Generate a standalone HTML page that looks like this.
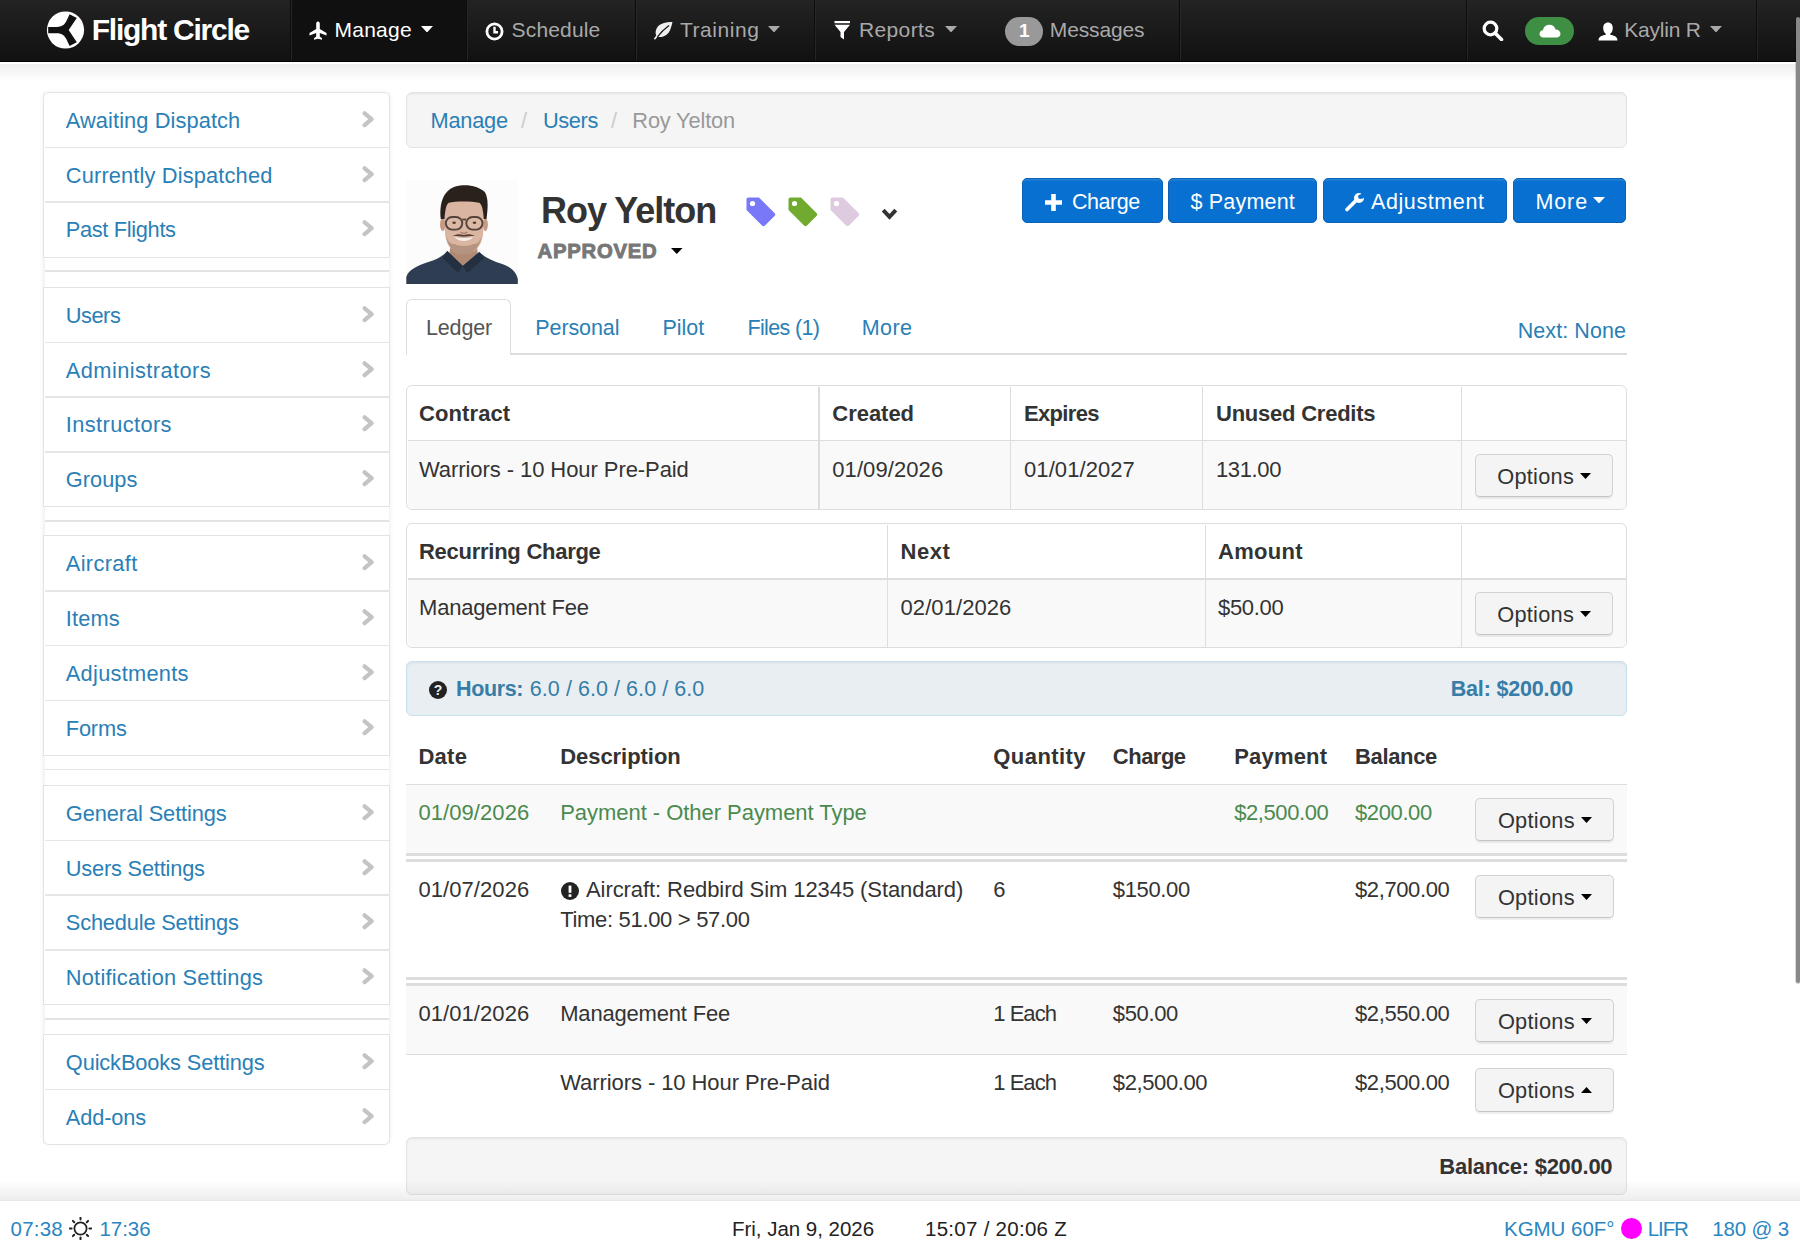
<!DOCTYPE html>
<html><head><meta charset="utf-8"><title>Roy Yelton - Flight Circle</title>
<style>
html,body{margin:0;padding:0;background:#fff;width:1800px;height:1253px;overflow:hidden;}
body{position:relative;font-family:"Liberation Sans",sans-serif;}
.t{position:absolute;white-space:nowrap;}
.b{position:absolute;}
</style></head><body>
<div class="b" style="left:0.00px;top:0.00px;width:1800.00px;height:61.00px;background:linear-gradient(#232323,#111111);"></div>
<div class="b" style="left:0.00px;top:60.75px;width:1800.00px;height:1.50px;background:#000;"></div>
<div class="b" style="left:0.00px;top:62.00px;width:1800.00px;height:20.00px;background:linear-gradient(rgba(0,0,0,0.075),rgba(0,0,0,0));"></div>
<div class="b" style="left:0.00px;top:62.00px;width:1800.00px;height:2.00px;background:#fff;"></div>
<div class="b" style="left:291.00px;top:0.00px;width:176.50px;height:60.75px;background:#101010;"></div>
<div class="b" style="left:290.00px;top:0.00px;width:1.00px;height:60.00px;background:#0c0c0c;"></div>
<div class="b" style="left:291.00px;top:0.00px;width:1.00px;height:60.00px;background:#262626;"></div>
<div class="b" style="left:466.00px;top:0.00px;width:1.00px;height:60.00px;background:#0c0c0c;"></div>
<div class="b" style="left:467.00px;top:0.00px;width:1.00px;height:60.00px;background:#262626;"></div>
<div class="b" style="left:635.00px;top:0.00px;width:1.00px;height:60.00px;background:#0c0c0c;"></div>
<div class="b" style="left:636.00px;top:0.00px;width:1.00px;height:60.00px;background:#262626;"></div>
<div class="b" style="left:814.00px;top:0.00px;width:1.00px;height:60.00px;background:#0c0c0c;"></div>
<div class="b" style="left:815.00px;top:0.00px;width:1.00px;height:60.00px;background:#262626;"></div>
<div class="b" style="left:1179.00px;top:0.00px;width:1.00px;height:60.00px;background:#0c0c0c;"></div>
<div class="b" style="left:1180.00px;top:0.00px;width:1.00px;height:60.00px;background:#262626;"></div>
<div class="b" style="left:1466.00px;top:0.00px;width:1.00px;height:60.00px;background:#0c0c0c;"></div>
<div class="b" style="left:1467.00px;top:0.00px;width:1.00px;height:60.00px;background:#262626;"></div>
<div class="b" style="left:1756.00px;top:0.00px;width:1.00px;height:60.00px;background:#0c0c0c;"></div>
<div class="b" style="left:1757.00px;top:0.00px;width:1.00px;height:60.00px;background:#262626;"></div>
<svg class="b" style="left:46.00px;top:11.00px" width="39" height="38" viewBox="0 0 39 38"><circle cx="19.5" cy="19" r="18.6" fill="#fff"/><path d="M2.2,15.9 L11,15.9 C15.5,15.9 18.3,13.8 20.3,10.2 L23.6,3.2 L30.8,6.9 L22.7,19.1 L30.8,31.3 L23.6,35 L20.3,28 C18.3,24.4 15.5,22.3 11,22.3 L2.2,22.3 Z" fill="#111"/></svg>
<div class="t" style="left:91.70px;top:12.67px;font-size:30.00px;line-height:34.47px;color:#fff;font-weight:700;letter-spacing:-1.235px;">Flight Circle</div>
<svg class="b" style="left:309.00px;top:21.00px" width="18" height="19" viewBox="0 0 18 19"><path d="M9,0.5 C10.3,0.5 10.8,1.8 10.8,3 L10.8,8 L17.5,12 L17.5,14.5 L10.8,12 L10.8,15.5 L13,17.3 L13,18.7 L9,17.8 L5,18.7 L5,17.3 L7.2,15.5 L7.2,12 L0.5,14.5 L0.5,12 L7.2,8 L7.2,3 C7.2,1.8 7.7,0.5 9,0.5 Z" fill="#fff"/></svg>
<div class="t" style="left:334.40px;top:17.86px;font-size:21.00px;line-height:24.13px;color:#fff;letter-spacing:0.285px;">Manage</div>
<svg class="b" style="left:421.00px;top:25.80px" width="12" height="6.5" viewBox="0 0 12 6.5"><path d="M0,0 L12,0 L6,6.5 Z" fill="#fff"/></svg>
<svg class="b" style="left:485.00px;top:21.50px" width="19" height="19" viewBox="0 0 19 19"><circle cx="9.5" cy="9.5" r="7.6" fill="none" stroke="#fff" stroke-width="2.8"/><path d="M9.5,4.8 L9.5,10.2 L13,10.2" fill="none" stroke="#fff" stroke-width="2.4"/></svg>
<div class="t" style="left:511.60px;top:17.86px;font-size:21.00px;line-height:24.13px;color:#a9a9a9;letter-spacing:0.154px;">Schedule</div>
<svg class="b" style="left:653.00px;top:21.00px" width="20" height="19" viewBox="0 0 20 19"><path d="M19.5,1 C13,1 5,2 3,9 C2.3,11.5 2.6,13.5 3.3,14.5 L0.8,17.8 L2,18.8 L4.5,15.8 C10,17 15.5,14 17.5,8 C18.5,5 19,3 19.5,1 Z" fill="#eee"/><path d="M4.5,15.8 C8,11 12,7.5 16,4.5" fill="none" stroke="#161616" stroke-width="1.2"/></svg>
<div class="t" style="left:680.00px;top:17.86px;font-size:21.00px;line-height:24.13px;color:#a9a9a9;letter-spacing:0.539px;">Training</div>
<svg class="b" style="left:768.00px;top:25.80px" width="12" height="6.5" viewBox="0 0 12 6.5"><path d="M0,0 L12,0 L6,6.5 Z" fill="#a9a9a9"/></svg>
<svg class="b" style="left:834.00px;top:20.50px" width="16.5" height="19" viewBox="0 0 16.5 19"><rect x="0.5" y="0" width="15.5" height="2.2" fill="#fff"/><path d="M0.5,3.8 L16,3.8 L10,11 L10,18.5 L6.5,16 L6.5,11 Z" fill="#fff"/></svg>
<div class="t" style="left:859.00px;top:17.86px;font-size:21.00px;line-height:24.13px;color:#a9a9a9;letter-spacing:0.367px;">Reports</div>
<svg class="b" style="left:945.00px;top:25.80px" width="12" height="6.5" viewBox="0 0 12 6.5"><path d="M0,0 L12,0 L6,6.5 Z" fill="#a9a9a9"/></svg>
<div class="b" style="left:1005.40px;top:16.90px;width:37.60px;height:28.70px;background:#999;border-radius:14.4px;"></div>
<div class="t" style="left:1005.40px;top:19.80px;font-size:19.00px;line-height:21.83px;color:#fff;font-weight:700;width:37.6px;text-align:center;">1</div>
<div class="t" style="left:1049.80px;top:17.86px;font-size:21.00px;line-height:24.13px;color:#a9a9a9;letter-spacing:-0.139px;">Messages</div>
<svg class="b" style="left:1482.00px;top:20.00px" width="22" height="21" viewBox="0 0 22 21"><circle cx="8.5" cy="8.5" r="6.3" fill="none" stroke="#fff" stroke-width="3.2"/><path d="M13,13 L19.5,19.5" stroke="#fff" stroke-width="3.6" stroke-linecap="round"/></svg>
<div class="b" style="left:1525.00px;top:16.90px;width:48.60px;height:28.40px;background:#3e8e43;border-radius:14.2px;"></div>
<svg class="b" style="left:1538.50px;top:23.50px" width="22" height="14" viewBox="0 0 22 14"><path d="M4.5,13.5 C1.8,13.5 0.5,11.8 0.5,9.8 C0.5,7.7 2,6.3 4,6.2 C4.5,3 7,0.8 10.5,0.8 C13.5,0.8 15.8,2.8 16.5,5.5 C19.5,5.5 21.5,7.5 21.5,9.8 C21.5,12 19.8,13.5 17.5,13.5 Z" fill="#fff"/></svg>
<svg class="b" style="left:1597.50px;top:22.00px" width="20" height="18.5" viewBox="0 0 20 18.5"><path d="M10,0.5 C13,0.5 14.8,2.8 14.8,6 C14.8,8.8 13.5,11 12.2,11.8 L12.2,12.8 C16.5,13.6 19.5,15 19.5,18.5 L0.5,18.5 C0.5,15 3.5,13.6 7.8,12.8 L7.8,11.8 C6.5,11 5.2,8.8 5.2,6 C5.2,2.8 7,0.5 10,0.5 Z" fill="#fff"/></svg>
<div class="t" style="left:1624.20px;top:17.86px;font-size:21.00px;line-height:24.13px;color:#a9a9a9;letter-spacing:-0.212px;">Kaylin R</div>
<svg class="b" style="left:1710.00px;top:25.80px" width="12" height="6.5" viewBox="0 0 12 6.5"><path d="M0,0 L12,0 L6,6.5 Z" fill="#a9a9a9"/></svg>
<div class="b" style="left:43.30px;top:91.70px;width:347.00px;height:1052.60px;border-radius:6px;background:#fff;box-shadow:0 0 5px rgba(0,0,0,0.06);"></div>
<div class="b" style="left:43.30px;top:91.70px;width:1.50px;height:1052.60px;background:#f4f4f4;"></div>
<div class="b" style="left:388.80px;top:91.70px;width:1.50px;height:1052.60px;background:#f4f4f4;"></div>
<div class="b" style="left:43.30px;top:91.70px;width:347.00px;height:165.90px;box-sizing:border-box;border:1.5px solid #e3e3e3;border-radius:6px 6px 0 0;background:#fff;"></div>
<div class="t" style="left:65.80px;top:107.72px;font-size:21.80px;line-height:25.05px;color:#2a80b6;letter-spacing:0.095px;">Awaiting Dispatch</div>
<svg class="b" style="left:360.50px;top:109.70px" width="14" height="18" viewBox="0 0 14 18"><path d="M3.6,3.3 L10.6,9.2 L3.6,15.1" fill="none" stroke="#c4c4c4" stroke-width="4.2" stroke-linejoin="round" stroke-linecap="round"/></svg>
<div class="b" style="left:44.50px;top:146.50px;width:345.00px;height:1.50px;background:#e6e6e6;"></div>
<div class="t" style="left:65.80px;top:162.52px;font-size:21.80px;line-height:25.05px;color:#2a80b6;letter-spacing:0.157px;">Currently Dispatched</div>
<svg class="b" style="left:360.50px;top:164.50px" width="14" height="18" viewBox="0 0 14 18"><path d="M3.6,3.3 L10.6,9.2 L3.6,15.1" fill="none" stroke="#c4c4c4" stroke-width="4.2" stroke-linejoin="round" stroke-linecap="round"/></svg>
<div class="b" style="left:44.50px;top:201.30px;width:345.00px;height:1.50px;background:#e6e6e6;"></div>
<div class="t" style="left:65.80px;top:217.32px;font-size:21.80px;line-height:25.05px;color:#2a80b6;letter-spacing:-0.332px;">Past Flights</div>
<svg class="b" style="left:360.50px;top:219.30px" width="14" height="18" viewBox="0 0 14 18"><path d="M3.6,3.3 L10.6,9.2 L3.6,15.1" fill="none" stroke="#c4c4c4" stroke-width="4.2" stroke-linejoin="round" stroke-linecap="round"/></svg>
<div class="b" style="left:44.50px;top:270.20px;width:344.00px;height:1.50px;background:#e3e3e3;"></div>
<div class="b" style="left:43.30px;top:286.70px;width:347.00px;height:220.70px;box-sizing:border-box;border:1.5px solid #e3e3e3;border-radius:0;background:#fff;"></div>
<div class="t" style="left:65.80px;top:302.72px;font-size:21.80px;line-height:25.05px;color:#2a80b6;letter-spacing:-0.485px;">Users</div>
<svg class="b" style="left:360.50px;top:304.70px" width="14" height="18" viewBox="0 0 14 18"><path d="M3.6,3.3 L10.6,9.2 L3.6,15.1" fill="none" stroke="#c4c4c4" stroke-width="4.2" stroke-linejoin="round" stroke-linecap="round"/></svg>
<div class="b" style="left:44.50px;top:341.50px;width:345.00px;height:1.50px;background:#e6e6e6;"></div>
<div class="t" style="left:65.80px;top:357.52px;font-size:21.80px;line-height:25.05px;color:#2a80b6;letter-spacing:0.427px;">Administrators</div>
<svg class="b" style="left:360.50px;top:359.50px" width="14" height="18" viewBox="0 0 14 18"><path d="M3.6,3.3 L10.6,9.2 L3.6,15.1" fill="none" stroke="#c4c4c4" stroke-width="4.2" stroke-linejoin="round" stroke-linecap="round"/></svg>
<div class="b" style="left:44.50px;top:396.30px;width:345.00px;height:1.50px;background:#e6e6e6;"></div>
<div class="t" style="left:65.80px;top:412.32px;font-size:21.80px;line-height:25.05px;color:#2a80b6;letter-spacing:0.394px;">Instructors</div>
<svg class="b" style="left:360.50px;top:414.30px" width="14" height="18" viewBox="0 0 14 18"><path d="M3.6,3.3 L10.6,9.2 L3.6,15.1" fill="none" stroke="#c4c4c4" stroke-width="4.2" stroke-linejoin="round" stroke-linecap="round"/></svg>
<div class="b" style="left:44.50px;top:451.10px;width:345.00px;height:1.50px;background:#e6e6e6;"></div>
<div class="t" style="left:65.80px;top:467.12px;font-size:21.80px;line-height:25.05px;color:#2a80b6;letter-spacing:0.002px;">Groups</div>
<svg class="b" style="left:360.50px;top:469.10px" width="14" height="18" viewBox="0 0 14 18"><path d="M3.6,3.3 L10.6,9.2 L3.6,15.1" fill="none" stroke="#c4c4c4" stroke-width="4.2" stroke-linejoin="round" stroke-linecap="round"/></svg>
<div class="b" style="left:44.50px;top:520.00px;width:344.00px;height:1.50px;background:#e3e3e3;"></div>
<div class="b" style="left:43.30px;top:535.20px;width:347.00px;height:220.70px;box-sizing:border-box;border:1.5px solid #e3e3e3;border-radius:0;background:#fff;"></div>
<div class="t" style="left:65.80px;top:551.22px;font-size:21.80px;line-height:25.05px;color:#2a80b6;letter-spacing:0.345px;">Aircraft</div>
<svg class="b" style="left:360.50px;top:553.20px" width="14" height="18" viewBox="0 0 14 18"><path d="M3.6,3.3 L10.6,9.2 L3.6,15.1" fill="none" stroke="#c4c4c4" stroke-width="4.2" stroke-linejoin="round" stroke-linecap="round"/></svg>
<div class="b" style="left:44.50px;top:590.00px;width:345.00px;height:1.50px;background:#e6e6e6;"></div>
<div class="t" style="left:65.80px;top:606.02px;font-size:21.80px;line-height:25.05px;color:#2a80b6;letter-spacing:0.140px;">Items</div>
<svg class="b" style="left:360.50px;top:608.00px" width="14" height="18" viewBox="0 0 14 18"><path d="M3.6,3.3 L10.6,9.2 L3.6,15.1" fill="none" stroke="#c4c4c4" stroke-width="4.2" stroke-linejoin="round" stroke-linecap="round"/></svg>
<div class="b" style="left:44.50px;top:644.80px;width:345.00px;height:1.50px;background:#e6e6e6;"></div>
<div class="t" style="left:65.80px;top:660.82px;font-size:21.80px;line-height:25.05px;color:#2a80b6;letter-spacing:0.277px;">Adjustments</div>
<svg class="b" style="left:360.50px;top:662.80px" width="14" height="18" viewBox="0 0 14 18"><path d="M3.6,3.3 L10.6,9.2 L3.6,15.1" fill="none" stroke="#c4c4c4" stroke-width="4.2" stroke-linejoin="round" stroke-linecap="round"/></svg>
<div class="b" style="left:44.50px;top:699.60px;width:345.00px;height:1.50px;background:#e6e6e6;"></div>
<div class="t" style="left:65.80px;top:715.62px;font-size:21.80px;line-height:25.05px;color:#2a80b6;letter-spacing:-0.192px;">Forms</div>
<svg class="b" style="left:360.50px;top:717.60px" width="14" height="18" viewBox="0 0 14 18"><path d="M3.6,3.3 L10.6,9.2 L3.6,15.1" fill="none" stroke="#c4c4c4" stroke-width="4.2" stroke-linejoin="round" stroke-linecap="round"/></svg>
<div class="b" style="left:44.50px;top:768.50px;width:344.00px;height:1.50px;background:#e3e3e3;"></div>
<div class="b" style="left:43.30px;top:784.70px;width:347.00px;height:220.70px;box-sizing:border-box;border:1.5px solid #e3e3e3;border-radius:0;background:#fff;"></div>
<div class="t" style="left:65.80px;top:800.72px;font-size:21.80px;line-height:25.05px;color:#2a80b6;letter-spacing:-0.093px;">General Settings</div>
<svg class="b" style="left:360.50px;top:802.70px" width="14" height="18" viewBox="0 0 14 18"><path d="M3.6,3.3 L10.6,9.2 L3.6,15.1" fill="none" stroke="#c4c4c4" stroke-width="4.2" stroke-linejoin="round" stroke-linecap="round"/></svg>
<div class="b" style="left:44.50px;top:839.50px;width:345.00px;height:1.50px;background:#e6e6e6;"></div>
<div class="t" style="left:65.80px;top:855.52px;font-size:21.80px;line-height:25.05px;color:#2a80b6;letter-spacing:-0.197px;">Users Settings</div>
<svg class="b" style="left:360.50px;top:857.50px" width="14" height="18" viewBox="0 0 14 18"><path d="M3.6,3.3 L10.6,9.2 L3.6,15.1" fill="none" stroke="#c4c4c4" stroke-width="4.2" stroke-linejoin="round" stroke-linecap="round"/></svg>
<div class="b" style="left:44.50px;top:894.30px;width:345.00px;height:1.50px;background:#e6e6e6;"></div>
<div class="t" style="left:65.80px;top:910.32px;font-size:21.80px;line-height:25.05px;color:#2a80b6;letter-spacing:-0.167px;">Schedule Settings</div>
<svg class="b" style="left:360.50px;top:912.30px" width="14" height="18" viewBox="0 0 14 18"><path d="M3.6,3.3 L10.6,9.2 L3.6,15.1" fill="none" stroke="#c4c4c4" stroke-width="4.2" stroke-linejoin="round" stroke-linecap="round"/></svg>
<div class="b" style="left:44.50px;top:949.10px;width:345.00px;height:1.50px;background:#e6e6e6;"></div>
<div class="t" style="left:65.80px;top:965.12px;font-size:21.80px;line-height:25.05px;color:#2a80b6;letter-spacing:0.225px;">Notification Settings</div>
<svg class="b" style="left:360.50px;top:967.10px" width="14" height="18" viewBox="0 0 14 18"><path d="M3.6,3.3 L10.6,9.2 L3.6,15.1" fill="none" stroke="#c4c4c4" stroke-width="4.2" stroke-linejoin="round" stroke-linecap="round"/></svg>
<div class="b" style="left:44.50px;top:1018.00px;width:344.00px;height:1.50px;background:#e3e3e3;"></div>
<div class="b" style="left:43.30px;top:1033.90px;width:347.00px;height:111.10px;box-sizing:border-box;border:1.5px solid #e3e3e3;border-radius:0 0 6px 6px;background:#fff;"></div>
<div class="t" style="left:65.80px;top:1049.92px;font-size:21.80px;line-height:25.05px;color:#2a80b6;letter-spacing:-0.123px;">QuickBooks Settings</div>
<svg class="b" style="left:360.50px;top:1051.90px" width="14" height="18" viewBox="0 0 14 18"><path d="M3.6,3.3 L10.6,9.2 L3.6,15.1" fill="none" stroke="#c4c4c4" stroke-width="4.2" stroke-linejoin="round" stroke-linecap="round"/></svg>
<div class="b" style="left:44.50px;top:1088.70px;width:345.00px;height:1.50px;background:#e6e6e6;"></div>
<div class="t" style="left:65.80px;top:1104.72px;font-size:21.80px;line-height:25.05px;color:#2a80b6;letter-spacing:-0.142px;">Add-ons</div>
<svg class="b" style="left:360.50px;top:1106.70px" width="14" height="18" viewBox="0 0 14 18"><path d="M3.6,3.3 L10.6,9.2 L3.6,15.1" fill="none" stroke="#c4c4c4" stroke-width="4.2" stroke-linejoin="round" stroke-linecap="round"/></svg>
<div class="b" style="left:406.40px;top:91.90px;width:1220.80px;height:55.80px;box-sizing:border-box;background:#f5f5f5;border:1.5px solid #e3e3e3;border-radius:6px;box-shadow:inset 0 1.5px 1.5px rgba(0,0,0,0.05);"></div>
<div class="t" style="left:430.60px;top:107.67px;font-size:21.80px;line-height:25.05px;color:#2a80b6;letter-spacing:-0.263px;">Manage</div>
<div class="t" style="left:521.00px;top:107.67px;font-size:21.80px;line-height:25.05px;color:#ccc;">/</div>
<div class="t" style="left:543.00px;top:107.67px;font-size:21.80px;line-height:25.05px;color:#2a80b6;letter-spacing:-0.405px;">Users</div>
<div class="t" style="left:611.00px;top:107.67px;font-size:21.80px;line-height:25.05px;color:#ccc;">/</div>
<div class="t" style="left:632.30px;top:107.67px;font-size:21.80px;line-height:25.05px;color:#999;letter-spacing:-0.154px;">Roy Yelton</div>
<svg class="b" style="left:405.70px;top:180.00px" width="112" height="104" viewBox="405.7 180 112 104"><rect x="405.7" y="180" width="112" height="104" fill="#fcfcfc"/><path d="M451,240 L476,240 L479,268 L447,268 Z" fill="#b08a74"/><path d="M406,284 L406,277 C408,270 416,266 428,262 C436,259.5 442,257 447,251 L462.5,266 L479,252 C484,257 492,261 502,264 C511,267 516,272 517.5,279 L517.5,284 Z" fill="#2e3d51"/><path d="M447,251 L462.5,266 L458,273 L442,258 Z" fill="#243042"/><path d="M479,252 L462.5,266 L467,273 L484,258 Z" fill="#243042"/><ellipse cx="442.5" cy="224.5" rx="2.8" ry="6.5" fill="#c69a85"/><ellipse cx="485" cy="224.5" rx="2.6" ry="6.5" fill="#c69a85"/><path d="M444.5,207 C444.5,201 450,199 463.5,199 C477,199 483,201 483,207 L483,229 C483,240 479.5,248 472,252.5 C468,254.6 459,254.6 455,252.5 C448,248 444.5,240 444.5,229 Z" fill="#dab6a2"/><path d="M445,233 C446.5,243 450.5,249 455,252.5 C459,254.6 468,254.6 472,252.5 C476.5,249 480.5,243 482.5,233 C481,240 477.5,244.5 473,244 C469,246.5 458,246.5 454,244 C449.5,244.5 446.5,240 445,233 Z" fill="#7a5c4a" opacity="0.38"/><path d="M440.5,219 C439,205 442,191 455,186.5 C465,183.5 478,185.5 484.5,192 C488.5,198 487.5,210 486.2,219 L483.3,219 C483,211 482,205 479,202.8 C471,201 455,201 448.5,202.8 C445.5,205 444.8,211 444.3,219 Z" fill="#2b211c"/><rect x="445.5" y="217" width="16.5" height="12.6" rx="6.3" fill="#e2c0ac" fill-opacity="0.3" stroke="#54443b" stroke-width="1.9"/><rect x="466" y="217" width="16.2" height="12.6" rx="6.3" fill="#e2c0ac" fill-opacity="0.3" stroke="#54443b" stroke-width="1.9"/><path d="M462,219.5 L466,219.5" stroke="#54443b" stroke-width="1.8"/><ellipse cx="453.8" cy="222.8" rx="1.8" ry="1.2" fill="#5a4034"/><ellipse cx="474.2" cy="222.8" rx="1.8" ry="1.2" fill="#5a4034"/><path d="M460,232 C462,233.5 465,233.5 467,232" stroke="#a07a66" stroke-width="1.2" fill="none"/><path d="M452.5,236 C456,234 460,233.8 463.5,235 C467,233.8 471,234 474.5,236 C470,236 466,236.3 463.5,236.8 C461,236.3 457,236 452.5,236 Z" fill="#5a4032"/><path d="M454,236.8 C458,242.5 469,242.5 473,236.8 C468,238.5 459,238.5 454,236.8 Z" fill="#f5eee8"/></svg>
<div class="t" style="left:541.10px;top:190.44px;font-size:36.00px;line-height:41.36px;color:#333;font-weight:700;letter-spacing:-1.038px;">Roy Yelton</div>
<div class="t" style="left:537.50px;top:239.60px;font-size:20.30px;line-height:23.32px;color:#777;font-weight:700;letter-spacing:0.759px;-webkit-text-stroke:0.9px #777;">APPROVED</div>
<svg class="b" style="left:671.00px;top:247.80px" width="11.5" height="6" viewBox="0 0 11.5 6"><path d="M0,0 L11.5,0 L5.75,6 Z" fill="#000"/></svg>
<svg class="b" style="left:746.00px;top:196.50px" width="30" height="30" viewBox="0 0 30 30"><path d="M2.5,0.5 L13,0.5 L28.5,16 C29.5,17 29.5,18 28.5,19 L19,28.5 C18,29.5 17,29.5 16,28.5 L0.5,13 L0.5,2.5 C0.5,1.3 1.3,0.5 2.5,0.5 Z" fill="#7878f8"/><circle cx="6.5" cy="6.5" r="2.6" fill="#fff"/></svg>
<svg class="b" style="left:788.00px;top:196.50px" width="30" height="30" viewBox="0 0 30 30"><path d="M2.5,0.5 L13,0.5 L28.5,16 C29.5,17 29.5,18 28.5,19 L19,28.5 C18,29.5 17,29.5 16,28.5 L0.5,13 L0.5,2.5 C0.5,1.3 1.3,0.5 2.5,0.5 Z" fill="#70ab30"/><circle cx="6.5" cy="6.5" r="2.6" fill="#fff"/></svg>
<svg class="b" style="left:829.50px;top:196.50px" width="30" height="30" viewBox="0 0 30 30"><path d="M2.5,0.5 L13,0.5 L28.5,16 C29.5,17 29.5,18 28.5,19 L19,28.5 C18,29.5 17,29.5 16,28.5 L0.5,13 L0.5,2.5 C0.5,1.3 1.3,0.5 2.5,0.5 Z" fill="#dfcbe0"/><circle cx="6.5" cy="6.5" r="2.6" fill="#fff"/></svg>
<svg class="b" style="left:880.50px;top:208.00px" width="17" height="12" viewBox="0 0 17 12"><path d="M2.2,2.2 L8.5,8.8 L14.8,2.2" fill="none" stroke="#333" stroke-width="4"/></svg>
<div class="b" style="left:1021.90px;top:178.00px;width:140.80px;height:44.70px;box-sizing:border-box;background:#0770d1;border:1.5px solid #0b61b4;border-radius:5px;box-shadow:inset 0 1.5px 0 rgba(255,255,255,0.12);"></div>
<div class="t" style="left:1071.90px;top:189.80px;font-size:21.50px;line-height:24.70px;color:#fff;letter-spacing:-0.419px;">Charge</div>
<svg class="b" style="left:1044.80px;top:193.60px" width="17" height="17" viewBox="0 0 17 17"><path d="M8.5,0 L8.5,17 M0,8.5 L17,8.5" stroke="#fff" stroke-width="4.6"/></svg>
<div class="b" style="left:1167.90px;top:178.00px;width:148.70px;height:44.70px;box-sizing:border-box;background:#0770d1;border:1.5px solid #0b61b4;border-radius:5px;box-shadow:inset 0 1.5px 0 rgba(255,255,255,0.12);"></div>
<div class="t" style="left:1190.50px;top:189.80px;font-size:21.50px;line-height:24.70px;color:#fff;letter-spacing:0.192px;">$ Payment</div>
<div class="b" style="left:1323.00px;top:178.00px;width:183.50px;height:44.70px;box-sizing:border-box;background:#0770d1;border:1.5px solid #0b61b4;border-radius:5px;box-shadow:inset 0 1.5px 0 rgba(255,255,255,0.12);"></div>
<div class="t" style="left:1371.00px;top:189.80px;font-size:21.50px;line-height:24.70px;color:#fff;letter-spacing:0.595px;">Adjustment</div>
<svg class="b" style="left:1345.00px;top:191.00px" width="21" height="21" viewBox="0 0 21 21"><path d="M2,18.5 L11,9.5" stroke="#fff" stroke-width="3.6" stroke-linecap="round"/><circle cx="14" cy="7" r="5" fill="#fff"/><circle cx="15.3" cy="5.7" r="2.2" fill="#0770d1"/><path d="M15.3,3.5 L19,-0.2 L22.2,3 L17.5,7.9 Z" fill="#0770d1"/></svg>
<div class="b" style="left:1512.60px;top:178.00px;width:113.80px;height:44.70px;box-sizing:border-box;background:#0770d1;border:1.5px solid #0b61b4;border-radius:5px;box-shadow:inset 0 1.5px 0 rgba(255,255,255,0.12);"></div>
<div class="t" style="left:1535.50px;top:189.80px;font-size:21.50px;line-height:24.70px;color:#fff;letter-spacing:0.879px;">More</div>
<svg class="b" style="left:1592.50px;top:196.50px" width="12" height="6.5" viewBox="0 0 12 6.5"><path d="M0,0 L12,0 L6,6.5 Z" fill="#fff"/></svg>
<div class="b" style="left:406.00px;top:353.20px;width:1220.70px;height:1.50px;background:#ddd;"></div>
<div class="b" style="left:406.00px;top:299.30px;width:105.00px;height:55.50px;box-sizing:border-box;background:#fff;border:1.5px solid #ddd;border-bottom:none;border-radius:6px 6px 0 0;"></div>
<div class="t" style="left:426.00px;top:315.50px;font-size:21.50px;line-height:24.70px;color:#555;letter-spacing:-0.157px;">Ledger</div>
<div class="t" style="left:535.30px;top:315.50px;font-size:21.50px;line-height:24.70px;color:#2a80b6;letter-spacing:-0.107px;">Personal</div>
<div class="t" style="left:662.50px;top:315.50px;font-size:21.50px;line-height:24.70px;color:#2a80b6;letter-spacing:-0.025px;">Pilot</div>
<div class="t" style="left:747.50px;top:315.50px;font-size:21.50px;line-height:24.70px;color:#2a80b6;letter-spacing:-0.660px;">Files (1)</div>
<div class="t" style="left:861.70px;top:315.50px;font-size:21.50px;line-height:24.70px;color:#2a80b6;letter-spacing:0.454px;">More</div>
<div class="t" style="left:1517.70px;top:318.60px;font-size:21.50px;line-height:24.70px;color:#2a80b6;letter-spacing:0.075px;">Next: None</div>
<div class="b" style="left:406.20px;top:385.20px;width:1221.00px;height:125.00px;box-sizing:border-box;border:1.5px solid #ddd;border-radius:6px;background:#fff;overflow:hidden;"></div>
<div class="b" style="left:407.70px;top:440.60px;width:1218.00px;height:68.10px;background:#f9f9f9;border-radius:0 0 5px 5px;"></div>
<div class="b" style="left:407.70px;top:439.85px;width:1218.00px;height:1.50px;background:#ddd;"></div>
<div class="b" style="left:818.45px;top:386.70px;width:1.50px;height:122.00px;background:#ddd;"></div>
<div class="b" style="left:1009.95px;top:386.70px;width:1.50px;height:122.00px;background:#ddd;"></div>
<div class="b" style="left:1201.95px;top:386.70px;width:1.50px;height:122.00px;background:#ddd;"></div>
<div class="b" style="left:1460.75px;top:386.70px;width:1.50px;height:122.00px;background:#ddd;"></div>
<div class="t" style="left:419.00px;top:401.14px;font-size:22.00px;line-height:25.28px;color:#333;font-weight:700;letter-spacing:0.106px;">Contract</div>
<div class="t" style="left:832.30px;top:401.14px;font-size:22.00px;line-height:25.28px;color:#333;font-weight:700;letter-spacing:-0.031px;">Created</div>
<div class="t" style="left:1024.00px;top:401.14px;font-size:22.00px;line-height:25.28px;color:#333;font-weight:700;letter-spacing:-0.670px;">Expires</div>
<div class="t" style="left:1216.00px;top:401.14px;font-size:22.00px;line-height:25.28px;color:#333;font-weight:700;letter-spacing:-0.234px;">Unused Credits</div>
<div class="t" style="left:419.00px;top:456.94px;font-size:22.00px;line-height:25.28px;color:#333;letter-spacing:-0.075px;">Warriors - 10 Hour Pre-Paid</div>
<div class="t" style="left:832.30px;top:456.94px;font-size:22.00px;line-height:25.28px;color:#333;letter-spacing:0.079px;">01/09/2026</div>
<div class="t" style="left:1024.00px;top:456.94px;font-size:22.00px;line-height:25.28px;color:#333;letter-spacing:0.079px;">01/01/2027</div>
<div class="t" style="left:1216.00px;top:456.94px;font-size:22.00px;line-height:25.28px;color:#333;letter-spacing:-0.381px;">131.00</div>
<div class="b" style="left:1474.70px;top:453.50px;width:138.50px;height:43.50px;box-sizing:border-box;background:#f4f4f4;border:1.5px solid #d2d2d2;border-bottom-color:#c4c4c4;border-radius:5px;box-shadow:0 1.5px 1px rgba(0,0,0,0.07);"></div>
<div class="t" style="left:1497.20px;top:463.62px;font-size:21.80px;line-height:25.05px;color:#333;letter-spacing:0.267px;">Options</div>
<svg class="b" style="left:1580.20px;top:472.50px" width="11" height="6.5" viewBox="0 0 11 6.5"><path d="M0,0 L11,0 L5.5,6 Z" fill="#000"/></svg>
<div class="b" style="left:406.20px;top:523.30px;width:1221.00px;height:125.00px;box-sizing:border-box;border:1.5px solid #ddd;border-radius:6px;background:#fff;overflow:hidden;"></div>
<div class="b" style="left:407.70px;top:578.80px;width:1218.00px;height:68.00px;background:#f9f9f9;border-radius:0 0 5px 5px;"></div>
<div class="b" style="left:407.70px;top:578.05px;width:1218.00px;height:1.50px;background:#ddd;"></div>
<div class="b" style="left:886.85px;top:524.80px;width:1.50px;height:122.00px;background:#ddd;"></div>
<div class="b" style="left:1204.75px;top:524.80px;width:1.50px;height:122.00px;background:#ddd;"></div>
<div class="b" style="left:1460.75px;top:524.80px;width:1.50px;height:122.00px;background:#ddd;"></div>
<div class="t" style="left:419.00px;top:539.24px;font-size:22.00px;line-height:25.28px;color:#333;font-weight:700;letter-spacing:-0.264px;">Recurring Charge</div>
<div class="t" style="left:900.50px;top:539.24px;font-size:22.00px;line-height:25.28px;color:#333;font-weight:700;letter-spacing:0.579px;">Next</div>
<div class="t" style="left:1218.00px;top:539.24px;font-size:22.00px;line-height:25.28px;color:#333;font-weight:700;letter-spacing:0.302px;">Amount</div>
<div class="t" style="left:419.00px;top:594.94px;font-size:22.00px;line-height:25.28px;color:#333;letter-spacing:-0.181px;">Management Fee</div>
<div class="t" style="left:900.50px;top:594.94px;font-size:22.00px;line-height:25.28px;color:#333;letter-spacing:0.079px;">02/01/2026</div>
<div class="t" style="left:1218.00px;top:594.94px;font-size:22.00px;line-height:25.28px;color:#333;letter-spacing:-0.315px;">$50.00</div>
<div class="b" style="left:1474.70px;top:591.50px;width:138.50px;height:43.50px;box-sizing:border-box;background:#f4f4f4;border:1.5px solid #d2d2d2;border-bottom-color:#c4c4c4;border-radius:5px;box-shadow:0 1.5px 1px rgba(0,0,0,0.07);"></div>
<div class="t" style="left:1497.20px;top:601.62px;font-size:21.80px;line-height:25.05px;color:#333;letter-spacing:0.267px;">Options</div>
<svg class="b" style="left:1580.20px;top:610.50px" width="11" height="6.5" viewBox="0 0 11 6.5"><path d="M0,0 L11,0 L5.5,6 Z" fill="#000"/></svg>
<div class="b" style="left:406.20px;top:661.10px;width:1221.00px;height:55.40px;box-sizing:border-box;background:#e8eef2;border:1.5px solid #c5e1ee;border-radius:6px;box-shadow:inset 0 1.5px 2px rgba(0,0,0,0.05);"></div>
<svg class="b" style="left:429.30px;top:681.00px" width="18" height="18" viewBox="0 0 18 18"><circle cx="9" cy="9" r="9" fill="#222"/><text x="9" y="14" text-anchor="middle" font-family="Liberation Sans" font-weight="700" font-size="14" fill="#e8eef2">?</text></svg>
<div class="t" style="left:456.00px;top:676.60px;font-size:21.50px;line-height:24.70px;color:#377da7;font-weight:700;letter-spacing:-0.379px;">Hours:</div>
<div class="t" style="left:529.80px;top:676.60px;font-size:21.50px;line-height:24.70px;color:#377da7;letter-spacing:0.057px;">6.0 / 6.0 / 6.0 / 6.0</div>
<div class="t" style="left:1450.70px;top:676.60px;font-size:21.50px;line-height:24.70px;color:#377da7;font-weight:700;letter-spacing:-0.167px;">Bal: $200.00</div>
<div class="t" style="left:418.40px;top:744.44px;font-size:22.00px;line-height:25.28px;color:#333;font-weight:700;letter-spacing:0.304px;">Date</div>
<div class="t" style="left:560.20px;top:744.44px;font-size:22.00px;line-height:25.28px;color:#333;font-weight:700;letter-spacing:-0.047px;">Description</div>
<div class="t" style="left:993.30px;top:744.44px;font-size:22.00px;line-height:25.28px;color:#333;font-weight:700;letter-spacing:0.434px;">Quantity</div>
<div class="t" style="left:1112.80px;top:744.44px;font-size:22.00px;line-height:25.28px;color:#333;font-weight:700;letter-spacing:-0.499px;">Charge</div>
<div class="t" style="left:1234.20px;top:744.44px;font-size:22.00px;line-height:25.28px;color:#333;font-weight:700;letter-spacing:0.185px;">Payment</div>
<div class="t" style="left:1355.00px;top:744.44px;font-size:22.00px;line-height:25.28px;color:#333;font-weight:700;letter-spacing:-0.340px;">Balance</div>
<div class="b" style="left:406.00px;top:783.60px;width:1220.70px;height:1.50px;background:#ddd;"></div>
<div class="b" style="left:406.00px;top:785.10px;width:1220.70px;height:68.00px;background:#f9f9f9;"></div>
<div class="t" style="left:418.40px;top:799.64px;font-size:22.00px;line-height:25.28px;color:#4a8a4e;letter-spacing:0.079px;">01/09/2026</div>
<div class="t" style="left:560.20px;top:799.64px;font-size:22.00px;line-height:25.28px;color:#4a8a4e;letter-spacing:-0.040px;">Payment - Other Payment Type</div>
<div class="t" style="left:1234.20px;top:799.64px;font-size:22.00px;line-height:25.28px;color:#4a8a4e;letter-spacing:-0.408px;">$2,500.00</div>
<div class="t" style="left:1355.00px;top:799.64px;font-size:22.00px;line-height:25.28px;color:#4a8a4e;letter-spacing:-0.389px;">$200.00</div>
<div class="b" style="left:1475.40px;top:797.50px;width:138.50px;height:43.50px;box-sizing:border-box;background:#f4f4f4;border:1.5px solid #d2d2d2;border-bottom-color:#c4c4c4;border-radius:5px;box-shadow:0 1.5px 1px rgba(0,0,0,0.07);"></div>
<div class="t" style="left:1497.90px;top:807.62px;font-size:21.80px;line-height:25.05px;color:#333;letter-spacing:0.267px;">Options</div>
<svg class="b" style="left:1580.90px;top:816.50px" width="11" height="6.5" viewBox="0 0 11 6.5"><path d="M0,0 L11,0 L5.5,6 Z" fill="#000"/></svg>
<div class="b" style="left:406.00px;top:853.00px;width:1220.70px;height:3.00px;background:#ddd;"></div>
<div class="b" style="left:406.00px;top:859.00px;width:1220.70px;height:3.00px;background:#ddd;"></div>
<div class="t" style="left:418.40px;top:877.14px;font-size:22.00px;line-height:25.28px;color:#333;letter-spacing:0.079px;">01/07/2026</div>
<svg class="b" style="left:560.50px;top:881.50px" width="18" height="18" viewBox="0 0 18 18"><circle cx="9" cy="9" r="9" fill="#222"/><rect x="7.6" y="3.6" width="2.8" height="7.2" fill="#fff"/><rect x="7.6" y="12.3" width="2.8" height="2.6" fill="#fff"/></svg>
<div class="t" style="left:586.00px;top:877.14px;font-size:22.00px;line-height:25.28px;color:#333;letter-spacing:-0.081px;">Aircraft: Redbird Sim 12345 (Standard)</div>
<div class="t" style="left:560.20px;top:907.14px;font-size:22.00px;line-height:25.28px;color:#333;letter-spacing:-0.320px;">Time: 51.00 &gt; 57.00</div>
<div class="t" style="left:993.30px;top:877.14px;font-size:22.00px;line-height:25.28px;color:#333;">6</div>
<div class="t" style="left:1112.80px;top:877.14px;font-size:22.00px;line-height:25.28px;color:#333;letter-spacing:-0.360px;">$150.00</div>
<div class="t" style="left:1355.00px;top:877.14px;font-size:22.00px;line-height:25.28px;color:#333;letter-spacing:-0.386px;">$2,700.00</div>
<div class="b" style="left:1475.40px;top:874.80px;width:138.50px;height:43.50px;box-sizing:border-box;background:#f4f4f4;border:1.5px solid #d2d2d2;border-bottom-color:#c4c4c4;border-radius:5px;box-shadow:0 1.5px 1px rgba(0,0,0,0.07);"></div>
<div class="t" style="left:1497.90px;top:884.92px;font-size:21.80px;line-height:25.05px;color:#333;letter-spacing:0.267px;">Options</div>
<svg class="b" style="left:1580.90px;top:893.80px" width="11" height="6.5" viewBox="0 0 11 6.5"><path d="M0,0 L11,0 L5.5,6 Z" fill="#000"/></svg>
<div class="b" style="left:406.00px;top:977.10px;width:1220.70px;height:3.00px;background:#ddd;"></div>
<div class="b" style="left:406.00px;top:983.00px;width:1220.70px;height:3.00px;background:#ddd;"></div>
<div class="b" style="left:406.00px;top:986.00px;width:1220.70px;height:67.80px;background:#f9f9f9;"></div>
<div class="t" style="left:418.40px;top:1000.74px;font-size:22.00px;line-height:25.28px;color:#333;letter-spacing:0.079px;">01/01/2026</div>
<div class="t" style="left:560.20px;top:1000.74px;font-size:22.00px;line-height:25.28px;color:#333;letter-spacing:-0.181px;">Management Fee</div>
<div class="t" style="left:993.30px;top:1000.74px;font-size:22.00px;line-height:25.28px;color:#333;letter-spacing:-0.982px;">1 Each</div>
<div class="t" style="left:1112.80px;top:1000.74px;font-size:22.00px;line-height:25.28px;color:#333;letter-spacing:-0.348px;">$50.00</div>
<div class="t" style="left:1355.00px;top:1000.74px;font-size:22.00px;line-height:25.28px;color:#333;letter-spacing:-0.386px;">$2,550.00</div>
<div class="b" style="left:1475.40px;top:998.50px;width:138.50px;height:43.50px;box-sizing:border-box;background:#f4f4f4;border:1.5px solid #d2d2d2;border-bottom-color:#c4c4c4;border-radius:5px;box-shadow:0 1.5px 1px rgba(0,0,0,0.07);"></div>
<div class="t" style="left:1497.90px;top:1008.62px;font-size:21.80px;line-height:25.05px;color:#333;letter-spacing:0.267px;">Options</div>
<svg class="b" style="left:1580.90px;top:1017.50px" width="11" height="6.5" viewBox="0 0 11 6.5"><path d="M0,0 L11,0 L5.5,6 Z" fill="#000"/></svg>
<div class="b" style="left:406.00px;top:1053.80px;width:1220.70px;height:1.50px;background:#ddd;"></div>
<div class="t" style="left:560.20px;top:1070.34px;font-size:22.00px;line-height:25.28px;color:#333;letter-spacing:-0.075px;">Warriors - 10 Hour Pre-Paid</div>
<div class="t" style="left:993.30px;top:1070.34px;font-size:22.00px;line-height:25.28px;color:#333;letter-spacing:-0.982px;">1 Each</div>
<div class="t" style="left:1112.80px;top:1070.34px;font-size:22.00px;line-height:25.28px;color:#333;letter-spacing:-0.386px;">$2,500.00</div>
<div class="t" style="left:1355.00px;top:1070.34px;font-size:22.00px;line-height:25.28px;color:#333;letter-spacing:-0.386px;">$2,500.00</div>
<div class="b" style="left:1475.40px;top:1068.20px;width:138.50px;height:43.50px;box-sizing:border-box;background:#f4f4f4;border:1.5px solid #d2d2d2;border-bottom-color:#c4c4c4;border-radius:5px;box-shadow:0 1.5px 1px rgba(0,0,0,0.07);"></div>
<div class="t" style="left:1497.90px;top:1078.32px;font-size:21.80px;line-height:25.05px;color:#333;letter-spacing:0.267px;">Options</div>
<svg class="b" style="left:1580.90px;top:1087.20px" width="11" height="6.5" viewBox="0 0 11 6.5"><path d="M0,6 L11,6 L5.5,0 Z" fill="#000"/></svg>
<div class="b" style="left:406.20px;top:1136.70px;width:1221.00px;height:58.30px;box-sizing:border-box;background:#f5f5f5;border:1.5px solid #e3e3e3;border-radius:6px;box-shadow:inset 0 1.5px 1.5px rgba(0,0,0,0.05);"></div>
<div class="t" style="left:1439.30px;top:1154.24px;font-size:22.00px;line-height:25.28px;color:#333;font-weight:700;letter-spacing:-0.271px;">Balance: $200.00</div>
<div class="b" style="left:0.00px;top:1180.00px;width:1800.00px;height:21.00px;background:linear-gradient(rgba(0,0,0,0),rgba(0,0,0,0.07));"></div>
<div class="b" style="left:0.00px;top:1200.00px;width:1800.00px;height:53.00px;background:#fff;border-top:1.5px solid #e8e8e8;box-sizing:border-box;"></div>
<div class="t" style="left:10.60px;top:1216.72px;font-size:20.50px;line-height:23.55px;color:#2a86c0;letter-spacing:0.180px;">07:38</div>
<svg class="b" style="left:69.00px;top:1217.00px" width="23" height="23" viewBox="0 0 23 23"><circle cx="11.5" cy="11.5" r="6.1" fill="none" stroke="#222" stroke-width="1.8"/><path d="M20.40,11.50 L22.30,11.50" stroke="#222" stroke-width="2" stroke-linecap="round"/><path d="M17.79,17.79 L19.14,19.14" stroke="#222" stroke-width="2" stroke-linecap="round"/><path d="M11.50,20.40 L11.50,22.30" stroke="#222" stroke-width="2" stroke-linecap="round"/><path d="M5.21,17.79 L3.86,19.14" stroke="#222" stroke-width="2" stroke-linecap="round"/><path d="M2.60,11.50 L0.70,11.50" stroke="#222" stroke-width="2" stroke-linecap="round"/><path d="M5.21,5.21 L3.86,3.86" stroke="#222" stroke-width="2" stroke-linecap="round"/><path d="M11.50,2.60 L11.50,0.70" stroke="#222" stroke-width="2" stroke-linecap="round"/><path d="M17.79,5.21 L19.14,3.86" stroke="#222" stroke-width="2" stroke-linecap="round"/></svg>
<div class="t" style="left:99.40px;top:1216.72px;font-size:20.50px;line-height:23.55px;color:#2a86c0;letter-spacing:-0.020px;">17:36</div>
<div class="t" style="left:732.00px;top:1217.12px;font-size:20.50px;line-height:23.55px;color:#222;letter-spacing:-0.027px;">Fri, Jan 9, 2026</div>
<div class="t" style="left:925.00px;top:1217.12px;font-size:20.50px;line-height:23.55px;color:#222;letter-spacing:0.273px;">15:07 / 20:06 Z</div>
<div class="t" style="left:1504.00px;top:1216.72px;font-size:20.50px;line-height:23.55px;color:#2a86c0;letter-spacing:-0.035px;">KGMU 60F°</div>
<div class="b" style="left:1621.00px;top:1217.80px;width:21.20px;height:21.20px;background:#f0f;border-radius:50%;"></div>
<div class="t" style="left:1647.80px;top:1216.72px;font-size:20.50px;line-height:23.55px;color:#2a86c0;letter-spacing:-1.106px;">LIFR</div>
<div class="t" style="left:1712.20px;top:1216.72px;font-size:20.50px;line-height:23.55px;color:#2a86c0;letter-spacing:-0.158px;">180 @ 3</div>
<div class="b" style="left:1795.50px;top:17.00px;width:4.00px;height:965.50px;background:#888;border-radius:2px;box-shadow:0 0 0 1px rgba(0,0,0,0.15);"></div>
</body></html>
